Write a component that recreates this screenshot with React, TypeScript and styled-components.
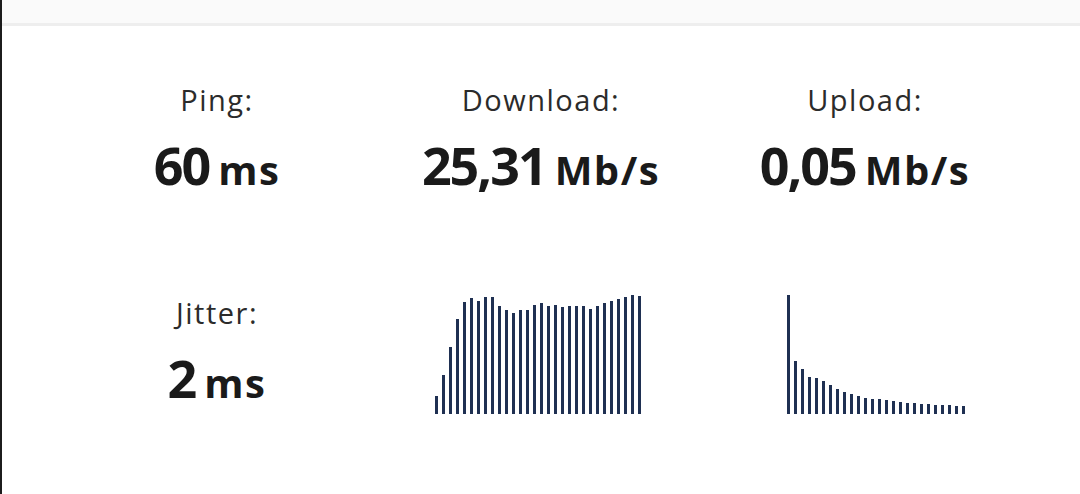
import styled, { createGlobalStyle } from "styled-components";

const GlobalStyle = createGlobalStyle`
  html, body {
    margin: 0;
    padding: 0;
    background: #ffffff;
    font-family: "Open Sans", "Noto Sans", sans-serif;
  }
`;

const Page = styled.div`
  min-height: 494px;
  border-left: 2px solid #1c1c1c;
  box-sizing: border-box;
  background: #ffffff;
`;

const TopBar = styled.header`
  height: 23px;
  background: #fafafa;
  border-bottom: 3px solid #eeeeee;
`;

const Results = styled.main`
  display: grid;
  grid-template-columns: repeat(3, 324px);
  row-gap: 95px;
  align-items: start;
  padding: 56px 0 0 53px;
`;

const Cell = styled.section`
  display: flex;
  flex-direction: column;
  align-items: center;
`;

const Label = styled.p`
  margin: 0 0 17px;
  font-size: 29px;
  line-height: 36px;
  letter-spacing: 1.5px;
  font-weight: 400;
  color: #2b2b2b;
`;

const Value = styled.div`
  display: flex;
  align-items: baseline;
  font-size: 52px;
  line-height: 60px;
  font-weight: 700;
  letter-spacing: -2px;
  color: #1a1a1a;
`;

const Unit = styled.span`
  margin-left: 9px;
  font-size: 40px;
  letter-spacing: 1.5px;
`;

const Chart = styled.div`
  width: 200px;
  height: 119px;
  display: flex;
  align-items: flex-end;
  justify-content: flex-end;
  gap: 4px;
`;

const Bar = styled.span`
  flex: 0 0 3px;
  background: #1f3052;
`;

const download = [
  18, 39, 67, 95, 112, 116, 113, 117, 117, 108, 104, 101, 104, 104, 109, 111,
  108, 109, 107, 108, 108, 108, 105, 108, 111, 113, 115, 117, 119, 118,
];

const upload = [
  119, 53, 45, 37, 36, 33, 29, 25, 22, 20, 18, 16, 15, 15, 14, 13, 12, 11, 11,
  10, 10, 9, 9, 9, 8, 8,
];

interface MetricProps {
  label: string;
  value: string;
  unit: string;
}

const Metric = ({ label, value, unit }: MetricProps) => (
  <Cell>
    <Label>{label}</Label>
    <Value>
      {value}
      <Unit>{unit}</Unit>
    </Value>
  </Cell>
);

const Graph = ({ data }: { data: number[] }) => (
  <Cell>
    <Chart>
      {data.map((h, i) => (
        <Bar key={i} style={{ height: h }} />
      ))}
    </Chart>
  </Cell>
);

export default function App() {
  return (
    <Page>
      <GlobalStyle />
      <TopBar />
      <Results>
        <Metric label="Ping:" value="60" unit="ms" />
        <Metric label="Download:" value="25,31" unit="Mb/s" />
        <Metric label="Upload:" value="0,05" unit="Mb/s" />
        <Metric label="Jitter:" value="2" unit="ms" />
        <Graph data={download} />
        <Graph data={upload} />
      </Results>
    </Page>
  );
}
